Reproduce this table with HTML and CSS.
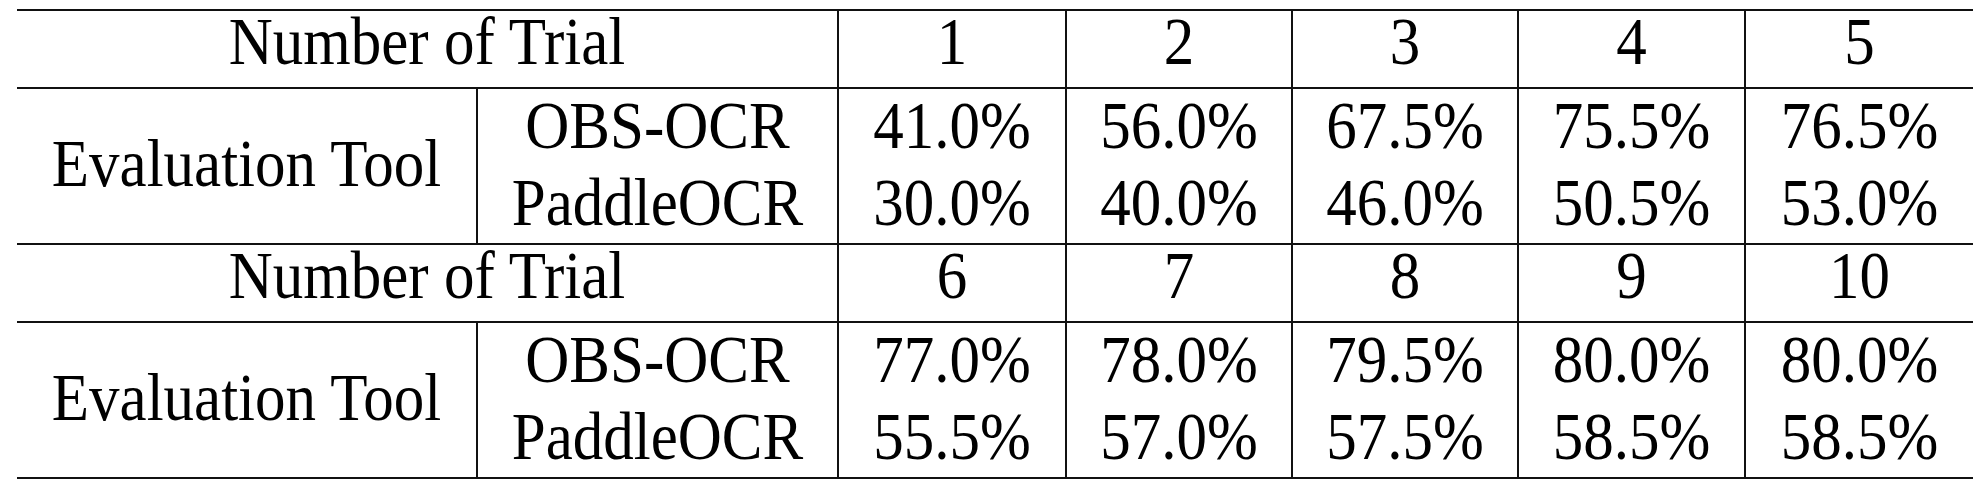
FILE: index.html
```html
<!DOCTYPE html>
<html>
<head>
<meta charset="utf-8">
<link rel="stylesheet" href="styles.css">
</head>
<body>
<table class="results">
  <colgroup>
    <col class="c-label"><col class="c-tool"><col class="c-v1"><col class="c-v2"><col class="c-v3"><col class="c-v4"><col class="c-v5">
  </colgroup>
  <tbody>
    <tr class="head first">
      <td colspan="2"><span class="t">Number of Trial</span></td>
      <td class="v"><span class="t">1</span></td><td class="v"><span class="t">2</span></td><td class="v"><span class="t">3</span></td><td class="v"><span class="t">4</span></td><td class="v"><span class="t">5</span></td>
    </tr>
    <tr class="data top">
      <td rowspan="2" class="label"><span class="t">Evaluation Tool</span></td>
      <td class="tool"><span class="t">OBS-OCR</span></td>
      <td class="v"><span class="t">41.0%</span></td><td class="v"><span class="t">56.0%</span></td><td class="v"><span class="t">67.5%</span></td><td class="v"><span class="t">75.5%</span></td><td class="v"><span class="t">76.5%</span></td>
    </tr>
    <tr class="data bottom">
      <td class="tool"><span class="t">PaddleOCR</span></td>
      <td class="v"><span class="t">30.0%</span></td><td class="v"><span class="t">40.0%</span></td><td class="v"><span class="t">46.0%</span></td><td class="v"><span class="t">50.5%</span></td><td class="v"><span class="t">53.0%</span></td>
    </tr>
    <tr class="head">
      <td colspan="2"><span class="t">Number of Trial</span></td>
      <td class="v"><span class="t">6</span></td><td class="v"><span class="t">7</span></td><td class="v"><span class="t">8</span></td><td class="v"><span class="t">9</span></td><td class="v"><span class="t">10</span></td>
    </tr>
    <tr class="data top">
      <td rowspan="2" class="label end"><span class="t">Evaluation Tool</span></td>
      <td class="tool"><span class="t">OBS-OCR</span></td>
      <td class="v"><span class="t">77.0%</span></td><td class="v"><span class="t">78.0%</span></td><td class="v"><span class="t">79.5%</span></td><td class="v"><span class="t">80.0%</span></td><td class="v"><span class="t">80.0%</span></td>
    </tr>
    <tr class="data bottom last">
      <td class="tool"><span class="t">PaddleOCR</span></td>
      <td class="v"><span class="t">55.5%</span></td><td class="v"><span class="t">57.0%</span></td><td class="v"><span class="t">57.5%</span></td><td class="v"><span class="t">58.5%</span></td><td class="v"><span class="t">58.5%</span></td>
    </tr>
  </tbody>
</table>
</body>
</html>
```
FILE: styles.css
```css
html, body {
  margin: 0;
  padding: 0;
  background: #ffffff;
}

body {
  padding: 9px 0 0 17px;
  font-family: "Liberation Serif", Tinos, "Times New Roman", Times, serif;
  color: #000000;
}

.results {
  border-collapse: collapse;
  table-layout: fixed;
  width: 1956px;
  font-family: "Liberation Serif", Tinos, "Times New Roman", Times, serif;
  font-size: 61px;
  line-height: 76px;
}

.c-label { width: 460px; }
.c-tool { width: 361px; }
.c-v1 { width: 228px; }
.c-v2 { width: 226px; }
.c-v3 { width: 226px; }
.c-v4 { width: 227px; }
.c-v5 { width: 228px; }

.results td {
  padding: 0;
  height: 77px;
  text-align: center;
  vertical-align: middle;
  white-space: nowrap;
}

.t {
  display: inline-block;
  line-height: 61px;
  transform: scaleY(1.1);
  transform-origin: 50% 51px;
}

.results tr.head td {
  border-top: 2px solid #111;
  border-bottom: 2px solid #111;
  line-height: 66px;
  height: 66px;
  padding-bottom: 10px;
}

.results tr.last td,
.results td.end {
  border-bottom: 2px solid #111;
}

.results td.label,
.results td.tool {
  border-right: 2px solid #111;
}

.results td.v {
  border-left: 2px solid #111;
}
```
